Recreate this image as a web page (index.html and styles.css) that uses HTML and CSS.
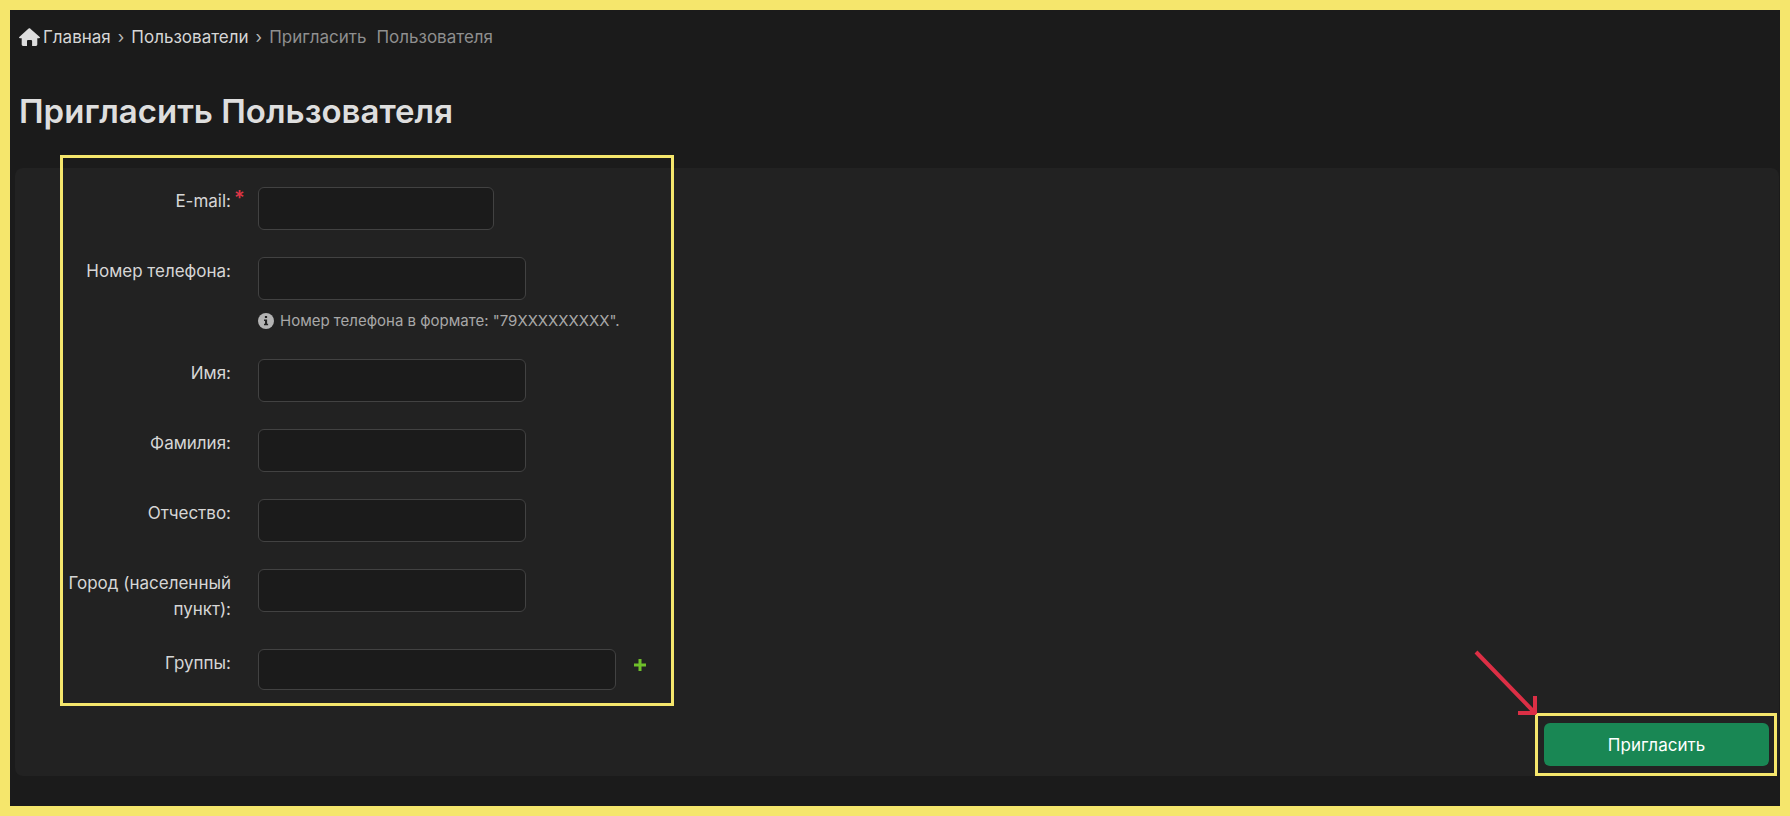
FILE: index.html
```html
<!DOCTYPE html>
<html lang="ru">
<head>
    <meta charset="UTF-8">
    <meta name="viewport" content="width=device-width, initial-scale=1.0">
    <title>Пригласить Пользователя</title>
    <link rel="stylesheet" href="styles.css">
</head>
<body>
    <!-- Breadcrumbs -->
    <nav class="breadcrumbs">
        <a href="#" class="crumb home">
            <svg class="home-icon" viewBox="0 0 21 18" aria-hidden="true">
                <path d="M10.5 0 L21 9.3 Q21 10.2 20 10.2 H18.3 V16.6 Q18.3 18 17 18 H13.1 V13 Q13.1 12 12 12 H9 Q8 12 8 13 V18 H4 Q2.7 18 2.7 16.6 V10.2 H1 Q0 10.2 0 9.3 L9.6 0.6 Q10.5 -0.2 11.4 0.6 Z"/>
            </svg>
            <span>Главная</span>
        </a>
        <span class="separator">›</span>
        <a href="#" class="crumb">Пользователи</a>
        <span class="separator">›</span>
        <span class="current"><span>Пригласить</span><span>Пользователя</span></span>
    </nav>

    <h1>Пригласить Пользователя</h1>

    <form class="panel">
        <div class="fields">
            <label for="email">E-mail:<span class="required">*</span></label>
            <div class="control"><input type="email" id="email" class="short" required></div>

            <label for="phone">Номер телефона:</label>
            <div class="control">
                <input type="tel" id="phone">
                <p class="hint">
                    <svg class="info-icon" viewBox="0 0 16 16" aria-hidden="true">
                        <circle cx="8" cy="8" r="8"/>
                        <path d="M6.9 3h2.2v2H6.9z M6 6.4h3.1v4.4h1v1.5H6v-1.5h1V7.9H6z"/>
                    </svg>
                    <span>Номер телефона в формате: "79XXXXXXXXX".</span>
                </p>
            </div>

            <label for="firstName">Имя:</label>
            <div class="control"><input type="text" id="firstName"></div>

            <label for="lastName">Фамилия:</label>
            <div class="control"><input type="text" id="lastName"></div>

            <label for="middleName">Отчество:</label>
            <div class="control"><input type="text" id="middleName"></div>

            <label for="city">Город (населенный пункт):</label>
            <div class="control"><input type="text" id="city"></div>

            <label for="groups">Группы:</label>
            <div class="control groups">
                <input type="text" id="groups" class="long">
                <button type="button" class="add" aria-label="Добавить группу">
                    <svg viewBox="0 0 12 12" aria-hidden="true"><path d="M4.5 0h3v4.5H12v3H7.5V12h-3V7.5H0v-3h4.5z"/></svg>
                </button>
            </div>
        </div>

        <div class="actions">
            <div class="highlight">
                <svg class="arrow" viewBox="0 0 64 66" aria-hidden="true">
                    <path d="M2 2 L60 62 M44 63 H62 M61 46 V64"/>
                </svg>
                <button type="submit" class="submit">Пригласить</button>
            </div>
        </div>
    </form>
</body>
</html>
```

FILE: styles.css
```css
/* Global Styles */
* {
    box-sizing: border-box;
}

body {
    margin: 0;
    min-height: 100vh;
    border: 10px solid #f5e66c;
    background-color: #1b1b1b;
    color: #d6d6d6;
    font-family: Inter, 'Noto Sans', sans-serif;
    font-size: 17px;
    line-height: 26px;
}

/* Breadcrumbs */
.breadcrumbs {
    display: flex;
    align-items: center;
    gap: 7px;
    padding: 14px 9px 0;
}

.crumb {
    color: #d6d6d6;
    text-decoration: none;
}

.home {
    display: flex;
    align-items: center;
    gap: 3px;
}

.home-icon {
    width: 21px;
    height: 18px;
    fill: #dedede;
}

.separator {
    color: #b8b8b8;
}

.current {
    display: flex;
    gap: 10px;
    color: #8f8f8f;
}

h1 {
    margin: 40px 9px 36px;
    color: #dedede;
    font-size: 33px;
    line-height: 42px;
    font-weight: 600;
}

/* Form */
.panel {
    margin: 0 1px 0 5px;
    border-radius: 8px;
    background-color: #222222;
}

.fields {
    display: inline-grid;
    grid-template-columns: 164px auto;
    column-gap: 27px;
    row-gap: 27px;
    margin: -13px 0 0 45px;
    padding: 29px 25px 13px 4px;
    border: 3px solid #f5e66c;
    vertical-align: top;
}

label {
    position: relative;
    padding-top: 1px;
    text-align: right;
}

.required {
    position: absolute;
    top: -2px;
    left: 100%;
    padding-left: 3px;
    color: #dc3545;
    font-size: 20px;
    font-weight: 600;
}

input {
    display: block;
    width: 268px;
    height: 43px;
    padding: 8px 12px;
    border: 1px solid #424242;
    border-radius: 6px;
    background-color: #1b1b1b;
    color: #dedede;
    font: inherit;
}

.short {
    width: 236px;
}

.long {
    width: 358px;
    height: 41px;
}

.hint {
    display: flex;
    align-items: center;
    gap: 6px;
    margin: 9px 0 0;
    color: #a8a8a8;
    font-size: 15px;
    line-height: 23px;
}

.info-icon {
    width: 16px;
    height: 16px;
}

.info-icon circle {
    fill: #b4b4b4;
}

.info-icon path {
    fill: #222222;
}

.groups {
    display: flex;
    gap: 18px;
}

.add {
    align-self: flex-start;
    display: flex;
    margin-top: 10px;
    padding: 0;
    border: 0;
    background: none;
    cursor: pointer;
}

.add svg {
    width: 12px;
    height: 12px;
    fill: #6fbf2a;
}

/* Submit */
.actions {
    display: flex;
    justify-content: flex-end;
    margin-top: 7px;
    padding-right: 2px;
}

.highlight {
    position: relative;
    padding: 7px 5px 7px 6px;
    border: 3px solid #f5e66c;
}

.submit {
    display: block;
    width: 225px;
    height: 43px;
    border: 0;
    border-radius: 6px;
    background-color: #198754;
    color: #ffffff;
    font: inherit;
    cursor: pointer;
}

/* Arrow pointing at the corner of the submit button */
.arrow {
    position: absolute;
    right: 100%;
    bottom: 100%;
    width: 64px;
    height: 66px;
    fill: none;
    stroke: #dc2f45;
    stroke-width: 4;
}
```
